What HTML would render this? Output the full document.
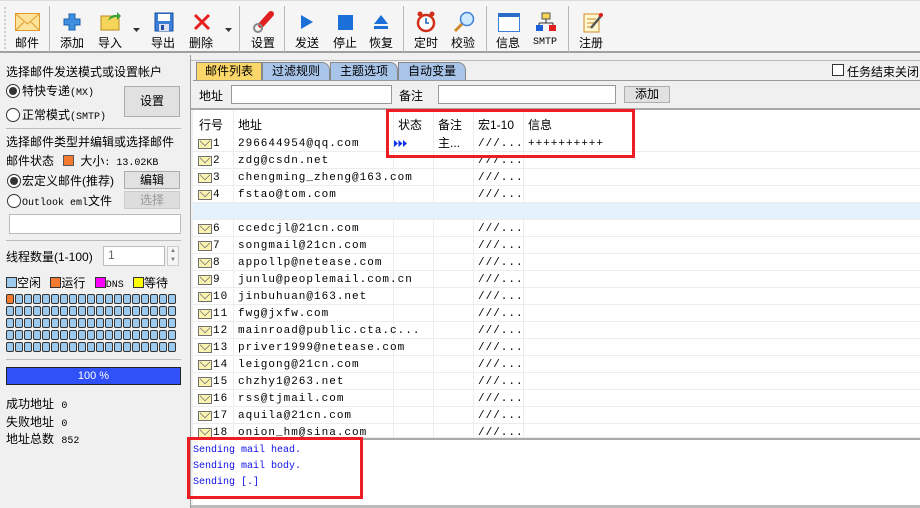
<!DOCTYPE html>
<html><head><meta charset="utf-8"><style>
*{box-sizing:border-box;margin:0;padding:0}
body{width:920px;height:508px;overflow:hidden;background:#f0f0f0;font-family:"Liberation Sans","Noto Sans CJK SC",sans-serif;font-size:12px;color:#000;position:relative}
.a{position:absolute}
.tb{left:0;top:0;width:920px;height:53px;background:#f5f5f5;border-bottom:2px solid #a0a0a0;border-top:1px solid #ddd}
.lbl{position:absolute;top:33px;font-size:12px;white-space:nowrap;transform:translateX(-50%)}
.sep{position:absolute;top:5px;width:1px;height:46px;background:#b8b8b8}
.ic{position:absolute}
.mono{font-family:"Liberation Mono","Noto Sans CJK SC",monospace;font-size:10px}
.row{position:absolute;left:193px;width:727px;height:17px;border-bottom:1px solid #ececec;font-family:"Liberation Mono",monospace;font-size:11px;letter-spacing:1px}
.row span{position:absolute;top:2px;white-space:nowrap;line-height:14px}
.env{position:absolute;left:5px;top:4px;width:14px;height:10px;background:#fbf3b0;border:1px solid #6f6f6f}
.env:after{content:"";position:absolute;left:1px;top:-4px;width:9px;height:9px;border-right:1px solid #6f6f6f;border-bottom:1px solid #6f6f6f;transform:rotate(45deg) scale(.75,.75)}
.vl{position:absolute;top:110px;width:1px;height:330px;background:#ececec}
.btn{position:absolute;background:#e1e1e1;border:1px solid #adadad;text-align:center}
.radio{position:absolute;width:14px;height:14px;border-radius:50%;border:1px solid #333;background:#fff}
.radio.on:after{content:"";position:absolute;left:2px;top:2px;width:8px;height:8px;border-radius:50%;background:#333}
.grid{position:absolute;left:6px;top:294px;width:175px}
.cell{float:left;width:8px;height:10px;margin-right:1px;margin-bottom:2px;background:#9ccbef;border:1px solid #333;border-radius:2px}
</style></head><body>
<div class="a tb">
<div class="a" style="left:4px;top:6px;width:2px;height:42px;border-left:2px dotted #ccc"></div>
<div class="ic" style="left:15px;top:12px;width:25px;height:18px;background:#fde49a;border:1px solid #e09a2c"></div>
<svg class="ic" style="left:15px;top:12px" width="25" height="18"><path d="M1 1 L12.5 11 L24 1 M1 17 L9 9 M24 17 L16 9" stroke="#e09a2c" fill="none"/></svg>
<div class="lbl" style="left:27px">邮件</div>
<div class="sep" style="left:49px"></div>
<svg class="ic" style="left:63px;top:12px" width="18" height="18"><path d="M6 1h6v5h5v6h-5v5h-6v-5h-5v-6h5z" fill="#3d8fe0" stroke="#1d5fb0"/></svg>
<div class="lbl" style="left:72px">添加</div>
<svg class="ic" style="left:100px;top:10px" width="22" height="20"><rect x="1" y="5" width="18" height="14" fill="#f5d65a" stroke="#b98c1c"/><path d="M8 10 Q10 3 17 4 L17 1 L21 5 L17 9 L17 6 Q12 6 8 10z" fill="#3aa33a"/></svg>
<div class="lbl" style="left:110px">导入</div>
<svg class="ic" style="left:133px;top:27px" width="7" height="4"><path d="M0 0h7L3.5 4z" fill="#333"/></svg>
<svg class="ic" style="left:154px;top:11px" width="20" height="20"><rect x="1" y="1" width="18" height="18" fill="#3a7ed8" stroke="#1d4f9f"/><rect x="4" y="2" width="12" height="7" fill="#fff"/><rect x="5" y="12" width="10" height="7" fill="#dde"/><rect x="7" y="13" width="3" height="5" fill="#1d4f9f"/></svg>
<div class="lbl" style="left:163px">导出</div>
<svg class="ic" style="left:193px;top:12px" width="18" height="18"><path d="M2 2L16 16M16 2L2 16" stroke="#e82020" stroke-width="3"/></svg>
<div class="lbl" style="left:201px">删除</div>
<svg class="ic" style="left:225px;top:27px" width="7" height="4"><path d="M0 0h7L3.5 4z" fill="#333"/></svg>
<div class="sep" style="left:239px"></div>
<svg class="ic" style="left:252px;top:10px" width="22" height="22"><path d="M9 14L19 3" stroke="#e02020" stroke-width="6" stroke-linecap="round"/><circle cx="6" cy="17" r="4" fill="none" stroke="#888" stroke-width="2"/></svg>
<div class="lbl" style="left:263px">设置</div>
<div class="sep" style="left:284px"></div>
<svg class="ic" style="left:300px;top:13px" width="14" height="16"><path d="M1 1L13 8L1 15z" fill="#1a6fd8"/></svg>
<div class="lbl" style="left:307px">发送</div>
<div class="ic" style="left:338px;top:14px;width:15px;height:15px;background:#1a6fd8"></div>
<div class="lbl" style="left:345px">停止</div>
<svg class="ic" style="left:373px;top:13px" width="16" height="16"><path d="M8 1L15 10H1z M1 12h14v3H1z" fill="#1a6fd8"/></svg>
<div class="lbl" style="left:381px">恢复</div>
<div class="sep" style="left:403px"></div>
<svg class="ic" style="left:416px;top:10px" width="20" height="22"><circle cx="10" cy="12" r="8" fill="#fff" stroke="#d0301a" stroke-width="2.5"/><path d="M10 7v5h3" stroke="#1a5fb0" fill="none" stroke-width="1.5"/><circle cx="4" cy="3" r="2.5" fill="#d0301a"/><circle cx="16" cy="3" r="2.5" fill="#d0301a"/></svg>
<div class="lbl" style="left:426px">定时</div>
<svg class="ic" style="left:453px;top:10px" width="22" height="22"><circle cx="14" cy="8" r="6.5" fill="#cfe9ff" stroke="#3a7ed8" stroke-width="1.5"/><path d="M9 13L2 20" stroke="#d08a2a" stroke-width="3"/></svg>
<div class="lbl" style="left:463px">校验</div>
<div class="sep" style="left:486px"></div>
<div class="ic" style="left:498px;top:12px;width:22px;height:19px;background:#fff;border:1px solid #3a7ed8;border-top:4px solid #2a6ac8"></div>
<div class="lbl" style="left:508px">信息</div>
<svg class="ic" style="left:535px;top:11px" width="22" height="20"><rect x="7" y="1" width="8" height="6" fill="#f5d65a" stroke="#555"/><path d="M11 7v4M4 11h14M4 11v3M18 11v3" stroke="#333"/><rect x="1" y="13" width="7" height="6" fill="#1a5fd8"/><rect x="14" y="13" width="7" height="6" fill="#e02020"/></svg>
<div class="lbl mono" style="left:545px;top:36px">SMTP</div>
<div class="sep" style="left:568px"></div>
<svg class="ic" style="left:582px;top:10px" width="22" height="22"><rect x="2" y="3" width="15" height="18" fill="#fff7d0" stroke="#d08a2a"/><path d="M5 8h9M5 12h9M5 16h6" stroke="#d08a2a"/><path d="M9 17L19 5" stroke="#555" stroke-width="2.5"/><circle cx="19" cy="4" r="2" fill="#e02020"/></svg>
<div class="lbl" style="left:591px">注册</div>
</div>

<div class="a" style="left:190px;top:55px;width:1px;height:453px;background:#a0a0a0"></div>
<div class="a" style="left:6px;top:63px">选择邮件发送模式或设置帐户</div>
<div class="radio on" style="left:6px;top:84px"></div>
<div class="a" style="left:22px;top:82px">特快专递<span class="mono">(MX)</span></div>
<div class="radio" style="left:6px;top:108px"></div>
<div class="a" style="left:22px;top:106px">正常模式<span class="mono">(SMTP)</span></div>
<div class="btn" style="left:124px;top:86px;width:56px;height:31px;line-height:29px">设置</div>
<div class="a" style="left:6px;top:128px;width:175px;height:1px;background:#bbb"></div>
<div class="a" style="left:6px;top:133px">选择邮件类型并编辑或选择邮件</div>
<div class="a" style="left:6px;top:152px">邮件状态 <span style="display:inline-block;width:11px;height:11px;background:#f47a30;border:1px solid #555;margin:0 6px;vertical-align:-1px"></span>大小<span class="mono">: 13.02KB</span></div>
<div class="radio on" style="left:7px;top:174px"></div>
<div class="a" style="left:22px;top:172px">宏定义邮件(推荐)</div>
<div class="btn" style="left:124px;top:171px;width:56px;height:18px;line-height:16px">编辑</div>
<div class="radio" style="left:7px;top:194px"></div>
<div class="a" style="left:22px;top:192px"><span class="mono">Outlook eml</span>文件</div>
<div class="btn" style="left:124px;top:191px;width:56px;height:18px;line-height:16px;color:#999;background:#ddd;border-color:#ccc">选择</div>
<div class="a" style="left:9px;top:214px;width:172px;height:20px;background:#fff;border:1px solid #bbb"></div>
<div class="a" style="left:6px;top:240px;width:175px;height:1px;background:#bbb"></div>
<div class="a" style="left:6px;top:248px">线程数量(1-100)</div>
<div class="a" style="left:103px;top:246px;width:62px;height:20px;background:#fff;border:1px solid #bbb;padding:1px 4px;color:#666">1</div>
<div class="a" style="left:167px;top:246px;width:12px;height:20px;border:1px solid #ccc;background:#f5f5f5;font-size:6px;color:#777;text-align:center;line-height:9px">▲<br>▼</div>
<div class="a" style="left:6px;top:274px"><span style="display:inline-block;width:11px;height:11px;background:#9ccbef;border:1px solid #333;vertical-align:-1px"></span>空闲 <span style="display:inline-block;width:11px;height:11px;background:#f47a30;border:1px solid #333;vertical-align:-1px;margin-left:6px"></span>运行 <span style="display:inline-block;width:11px;height:11px;background:#f0f;border:1px solid #333;vertical-align:-1px;margin-left:6px"></span><span class="mono">DNS</span> <span style="display:inline-block;width:11px;height:11px;background:#ff0;border:1px solid #333;vertical-align:-1px;margin-left:6px"></span>等待</div>
<div class="grid">
<div class="cell" style="background:#f47a30"></div><div class="cell"></div><div class="cell"></div><div class="cell"></div><div class="cell"></div><div class="cell"></div><div class="cell"></div><div class="cell"></div><div class="cell"></div><div class="cell"></div><div class="cell"></div><div class="cell"></div><div class="cell"></div><div class="cell"></div><div class="cell"></div><div class="cell"></div><div class="cell"></div><div class="cell"></div><div class="cell"></div>
<div class="cell"></div><div class="cell"></div><div class="cell"></div><div class="cell"></div><div class="cell"></div><div class="cell"></div><div class="cell"></div><div class="cell"></div><div class="cell"></div><div class="cell"></div><div class="cell"></div><div class="cell"></div><div class="cell"></div><div class="cell"></div><div class="cell"></div><div class="cell"></div><div class="cell"></div><div class="cell"></div><div class="cell"></div>
<div class="cell"></div><div class="cell"></div><div class="cell"></div><div class="cell"></div><div class="cell"></div><div class="cell"></div><div class="cell"></div><div class="cell"></div><div class="cell"></div><div class="cell"></div><div class="cell"></div><div class="cell"></div><div class="cell"></div><div class="cell"></div><div class="cell"></div><div class="cell"></div><div class="cell"></div><div class="cell"></div><div class="cell"></div>
<div class="cell"></div><div class="cell"></div><div class="cell"></div><div class="cell"></div><div class="cell"></div><div class="cell"></div><div class="cell"></div><div class="cell"></div><div class="cell"></div><div class="cell"></div><div class="cell"></div><div class="cell"></div><div class="cell"></div><div class="cell"></div><div class="cell"></div><div class="cell"></div><div class="cell"></div><div class="cell"></div><div class="cell"></div>
<div class="cell"></div><div class="cell"></div><div class="cell"></div><div class="cell"></div><div class="cell"></div><div class="cell"></div><div class="cell"></div><div class="cell"></div><div class="cell"></div><div class="cell"></div><div class="cell"></div><div class="cell"></div><div class="cell"></div><div class="cell"></div><div class="cell"></div><div class="cell"></div><div class="cell"></div><div class="cell"></div><div class="cell"></div>
</div>
<div class="a" style="left:6px;top:359px;width:175px;height:1px;background:#bbb"></div>
<div class="a" style="left:6px;top:367px;width:175px;height:18px;background:#3050f8;border:1px solid #222;color:#fff;text-align:center;line-height:16px;font-size:11px">100 %</div>
<div class="a" style="left:6px;top:395px">成功地址 <span class="mono" style="margin-left:4px">0</span></div>
<div class="a" style="left:6px;top:413px">失败地址 <span class="mono" style="margin-left:4px">0</span></div>
<div class="a" style="left:6px;top:430px">地址总数 <span class="mono" style="margin-left:4px">852</span></div>

<div class="a" style="left:191px;top:60px;width:729px;height:1px;background:#bbb"></div>
<div class="a" style="left:196px;top:62px;width:66px;height:18px;background:#fbd76a;border:1px solid #888;border-bottom:none;text-align:center;line-height:17px">邮件列表</div>
<div class="a" style="left:262px;top:62px;width:68px;height:18px;background:#a8c4e8;border:1px solid #888;border-bottom:none;text-align:center;line-height:17px;border-radius:0 8px 0 0">过滤规则</div>
<div class="a" style="left:330px;top:62px;width:68px;height:18px;background:#a8c4e8;border:1px solid #888;border-bottom:none;text-align:center;line-height:17px;border-radius:0 8px 0 0">主题选项</div>
<div class="a" style="left:398px;top:62px;width:68px;height:18px;background:#a8c4e8;border:1px solid #888;border-bottom:none;text-align:center;line-height:17px;border-radius:0 8px 0 0">自动变量</div>
<div class="a" style="left:193px;top:80px;width:727px;height:1px;background:#999"></div>
<div class="a" style="left:832px;top:64px;width:12px;height:12px;border:1px solid #333;background:#fff"></div>
<div class="a" style="left:847px;top:63px;white-space:nowrap">任务结束关闭</div>
<div class="a" style="left:199px;top:87px">地址</div>
<div class="a" style="left:231px;top:85px;width:161px;height:19px;background:#fff;border:1px solid #999"></div>
<div class="a" style="left:399px;top:87px">备注</div>
<div class="a" style="left:438px;top:85px;width:178px;height:19px;background:#fff;border:1px solid #999"></div>
<div class="btn" style="left:624px;top:86px;width:46px;height:17px;line-height:15px">添加</div>
<div class="a" style="left:191px;top:108px;width:729px;height:2px;background:#aaa"></div>

<div class="a" style="left:193px;top:110px;width:727px;height:330px;background:#fff;overflow:hidden"></div>
<div class="vl" style="left:233px"></div><div class="vl" style="left:393px"></div><div class="vl" style="left:433px"></div><div class="vl" style="left:473px"></div><div class="vl" style="left:523px"></div>
<div class="a" style="left:199px;top:116px">行号</div><div class="a" style="left:238px;top:116px">地址</div><div class="a" style="left:398px;top:116px">状态</div><div class="a" style="left:438px;top:116px">备注</div><div class="a" style="left:478px;top:116px">宏1-10</div><div class="a" style="left:528px;top:116px">信息</div>
<div class="row" style="top:135px"><i class="env"></i><span style="left:20px">1</span><span style="left:45px">296644954@qq.com</span><svg style="position:absolute;left:201px;top:5px" width="13" height="7"><path d="M0 0L4 3.5L0 7zM4.5 0L8.5 3.5L4.5 7zM9 0L13 3.5L9 7z" fill="#1030f0"/></svg><span style="left:245px;font-family:'Liberation Sans','Noto Sans CJK SC';font-size:12px;top:1px;letter-spacing:0">主...</span><span style="left:285px">///...</span><span style="left:335px">++++++++++</span></div>
<div class="row" style="top:152px"><i class="env"></i><span style="left:20px">2</span><span style="left:45px">zdg@csdn.net</span><span style="left:285px">///...</span></div>
<div class="row" style="top:169px"><i class="env"></i><span style="left:20px">3</span><span style="left:45px">chengming_zheng@163.com</span><span style="left:285px">///...</span></div>
<div class="row" style="top:186px"><i class="env"></i><span style="left:20px">4</span><span style="left:45px">fstao@tom.com</span><span style="left:285px">///...</span></div>
<div class="row" style="top:203px;background:#e5f1fb;height:17px"></div>
<div class="row" style="top:220px"><i class="env"></i><span style="left:20px">6</span><span style="left:45px">ccedcjl@21cn.com</span><span style="left:285px">///...</span></div>
<div class="row" style="top:237px"><i class="env"></i><span style="left:20px">7</span><span style="left:45px">songmail@21cn.com</span><span style="left:285px">///...</span></div>
<div class="row" style="top:254px"><i class="env"></i><span style="left:20px">8</span><span style="left:45px">appollp@netease.com</span><span style="left:285px">///...</span></div>
<div class="row" style="top:271px"><i class="env"></i><span style="left:20px">9</span><span style="left:45px">junlu@peoplemail.com.cn</span><span style="left:285px">///...</span></div>
<div class="row" style="top:288px"><i class="env"></i><span style="left:20px">10</span><span style="left:45px">jinbuhuan@163.net</span><span style="left:285px">///...</span></div>
<div class="row" style="top:305px"><i class="env"></i><span style="left:20px">11</span><span style="left:45px">fwg@jxfw.com</span><span style="left:285px">///...</span></div>
<div class="row" style="top:322px"><i class="env"></i><span style="left:20px">12</span><span style="left:45px">mainroad@public.cta.c...</span><span style="left:285px">///...</span></div>
<div class="row" style="top:339px"><i class="env"></i><span style="left:20px">13</span><span style="left:45px">priver1999@netease.com</span><span style="left:285px">///...</span></div>
<div class="row" style="top:356px"><i class="env"></i><span style="left:20px">14</span><span style="left:45px">leigong@21cn.com</span><span style="left:285px">///...</span></div>
<div class="row" style="top:373px"><i class="env"></i><span style="left:20px">15</span><span style="left:45px">chzhy1@263.net</span><span style="left:285px">///...</span></div>
<div class="row" style="top:390px"><i class="env"></i><span style="left:20px">16</span><span style="left:45px">rss@tjmail.com</span><span style="left:285px">///...</span></div>
<div class="row" style="top:407px"><i class="env"></i><span style="left:20px">17</span><span style="left:45px">aquila@21cn.com</span><span style="left:285px">///...</span></div>
<div class="row" style="top:424px;height:14px;overflow:hidden"><i class="env"></i><span style="left:20px">18</span><span style="left:45px">onion_hm@sina.com</span><span style="left:285px">///...</span></div>
<div class="a" style="left:191px;top:438px;width:729px;height:2px;background:#aaa"></div>
<div class="a mono" style="left:193px;top:440px;width:727px;height:66px;background:#fff;color:#1010e8;padding:3px 0 0 0;line-height:16px">Sending mail head.<br>Sending mail body.<br>Sending [.]</div>
<div class="a" style="left:191px;top:505px;width:729px;height:3px;background:#bbb"></div>

<div class="a" style="left:386px;top:109px;width:249px;height:49px;border:3px solid #f01c24"></div>
<div class="a" style="left:187px;top:437px;width:176px;height:62px;border:3px solid #f01c24"></div>
</body></html>
